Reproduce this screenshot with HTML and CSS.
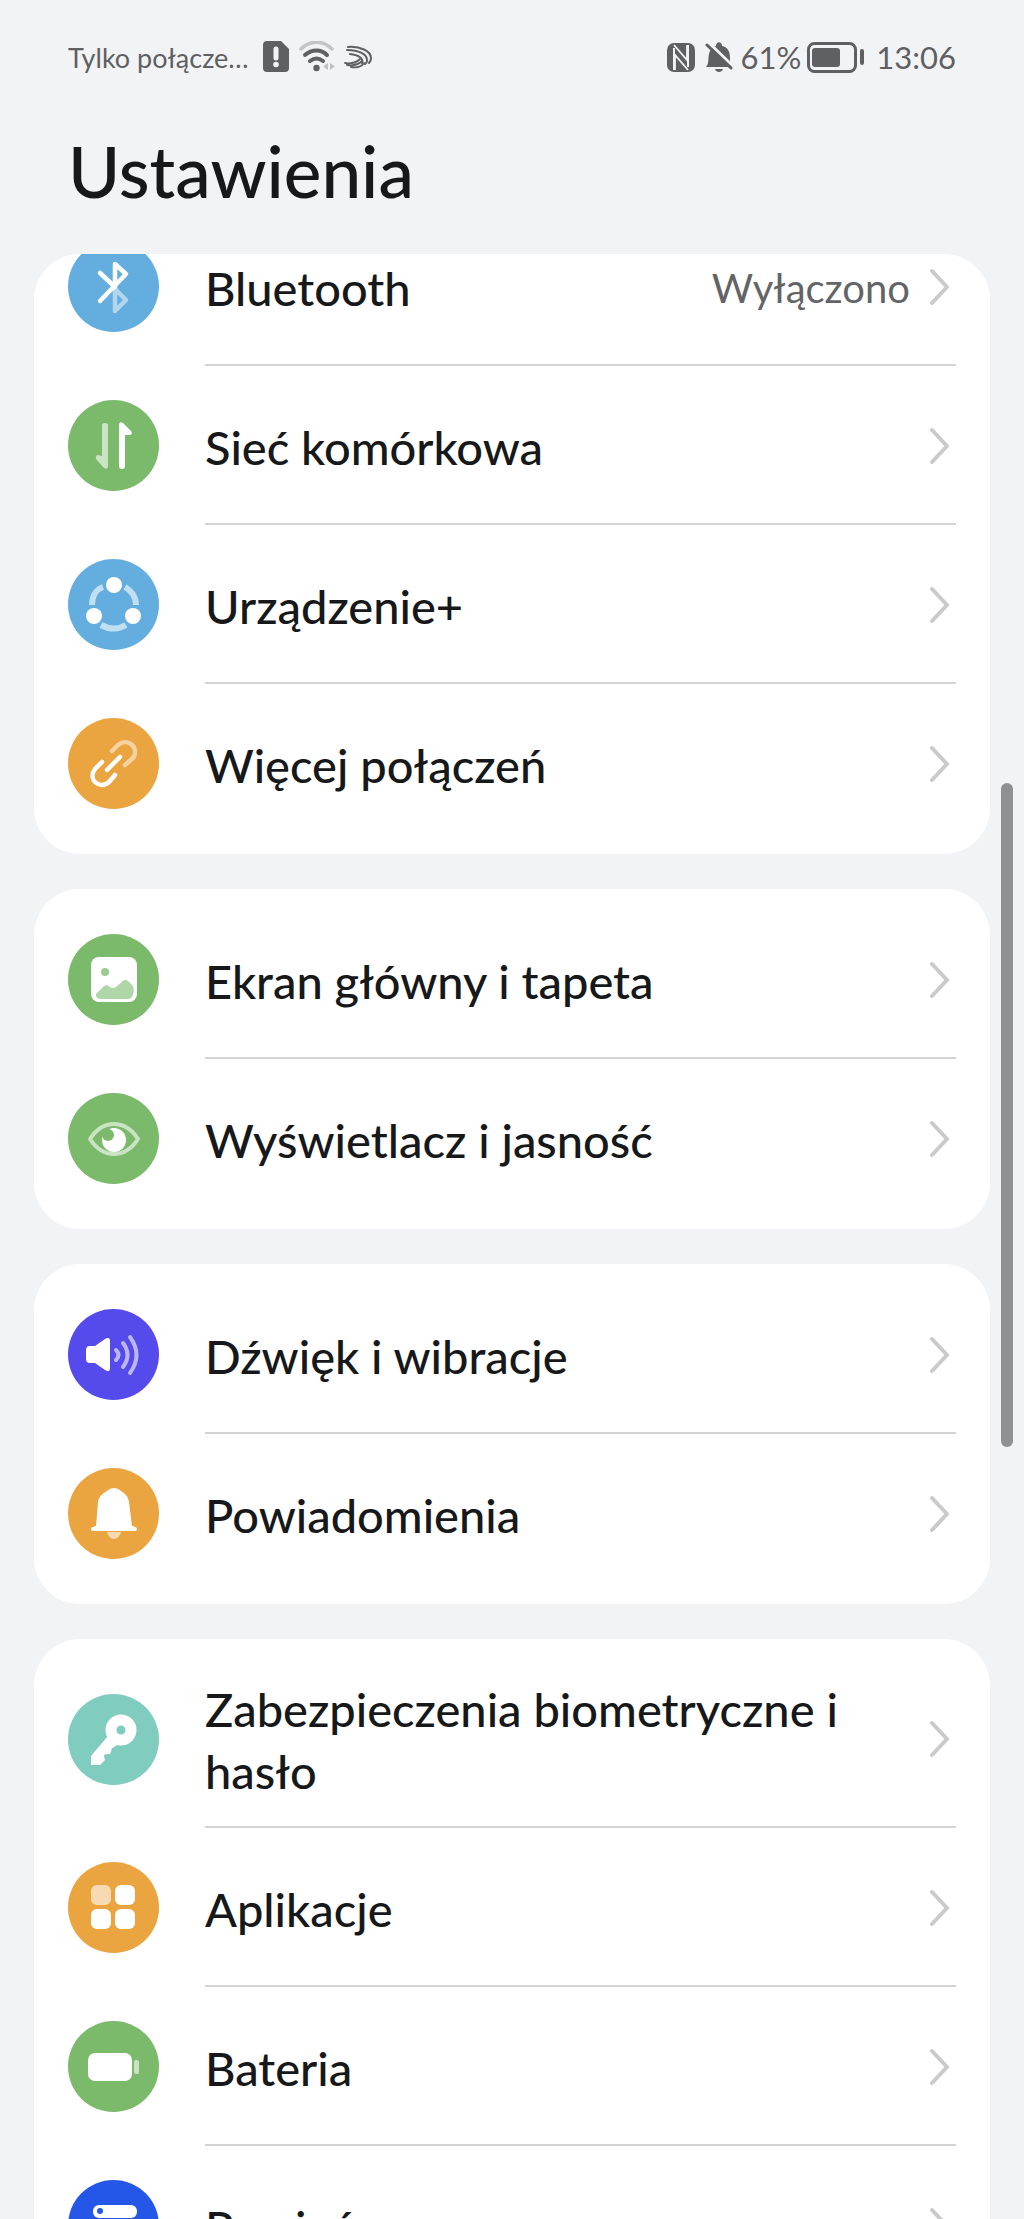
FILE: index.html
```html
<!DOCTYPE html>
<html lang="pl">
<head>
  <meta charset="UTF-8" />
  <meta name="viewport" content="width=device-width, initial-scale=1.0" />
  <title>Ustawienia</title>
  <link rel="stylesheet" href="styles.css">
</head>
<body>
  <header class="status-bar">
    <div class="status-side">
      <span class="carrier">Tylko połącze…</span>
      <svg class="status-icon" width="26" height="32" viewBox="0 0 26 32">
        <path d="M4 0h14l8 8v19a4 4 0 0 1-4 4H4a4 4 0 0 1-4-4V4a4 4 0 0 1 4-4z" fill="#5f6062"/>
        <path d="M13 8v9" stroke="#f1f3f5" stroke-width="5" stroke-linecap="round"/>
        <circle cx="13" cy="23.5" r="2.8" fill="#f1f3f5"/>
      </svg>
      <svg class="status-icon wifi" width="37" height="32" viewBox="0 0 37 32" fill="none" stroke-linecap="round">
        <path d="M2 8C11-1 24-1 33 8" stroke="#c4c5c7" stroke-width="3.5"/>
        <path d="M6 14C13 8 22 8 28 14M11 20C15 17 20 17 24 20" stroke="#5f6062" stroke-width="4"/>
        <circle cx="17.5" cy="27" r="3.2" fill="#5f6062"/>
        <path d="M29 22v7l-5-3.500zM31 22v7l5-3.500z" fill="#bfc0c2"/>
      </svg>
      <svg class="status-icon" width="28" height="24" viewBox="0 0 28 24" fill="none" stroke="#5f6062" stroke-linecap="round">
        <path d="M4 2C16 1 27 6 27 13q0 3-2 5" stroke-width="2"/>
        <path d="M3 5C14 5 24 9 23 16q0 2-2 3" stroke-width="2"/>
        <path d="M6 9C14 10 20 13 18 18" stroke-width="2"/>
        <path d="M1 18C8 19 13 17 16 14M3 20C10 21 15 19 18 16M7 22C13 23 18 21 20 18" stroke-width="1.8"/>
      </svg>
    </div>
    <div class="status-side">
      <svg class="status-icon" width="28" height="29" viewBox="0 0 28 29">
        <rect width="28" height="29" rx="7" fill="#5f6062"/>
        <path d="M7 5v22M21 2v22" stroke="#f1f3f5" stroke-width="2"/>
        <path d="M7 2l13 15V2M21 27L8 12v15" fill="none" stroke="#f1f3f5" stroke-width="1.8"/>
      </svg>
      <svg class="status-icon bell" width="28" height="30" viewBox="0 0 28 30">
        <path d="M1 25c3-3 2-8 3-13 1-4 3-7 7-8 0-5 6-5 6 0 6 1 8 6 8 12 0 5 0 6 3 9z" fill="#5f6062"/>
        <path d="M10 27h8c-1 4-7 4-8 0z" fill="#5f6062"/>
        <path d="M3 0l26 25" stroke="#f1f3f5" stroke-width="3"/>
        <path d="M2 3l24 23" stroke="#5f6062" stroke-width="3" stroke-linecap="round"/>
      </svg>
      <span class="battery-level">61%</span>
      <svg class="status-icon" width="57" height="31" viewBox="0 0 57 31">
        <rect x="1.5" y="1.5" width="47" height="28" rx="6" fill="none" stroke="#5f6062" stroke-width="3"/>
        <rect x="5" y="6" width="28" height="19" rx="3" fill="#5f6062"/>
        <rect x="53" y="7" width="4" height="16" rx="2" fill="#5f6062"/>
      </svg>
      <time class="clock">13:06</time>
    </div>
  </header>

  <h1 class="page-title">Ustawienia</h1>

  <main class="settings">
    <nav class="card card-scrolled">
      <a class="row" href="#">
        <svg class="icon blue" viewBox="0 0 91 91" fill="none" stroke="#fff" stroke-width="4.500" stroke-linecap="round" stroke-linejoin="round">
          <path d="M47 45v25l11-11-10-10" opacity=".5"/>
          <path d="M32 32l15 14V23l11 10L32 60"/>
        </svg>
        <span class="label">Bluetooth</span>
        <span class="value">Wyłączono</span>
        <svg class="chevron" viewBox="0 0 20 38"><path d="M2 3l15 16L2 35"/></svg>
      </a>
      <a class="row" href="#">
        <svg class="icon green" viewBox="0 0 91 91" fill="#fff">
          <path d="M34 25q0-2 3-2t3 2v41q0 4-4 2l-8-9q-1-4 2-4l4 1z" opacity=".6"/>
          <path d="M51 66q0 3 3 3t3-3V35l5 0q3-1 1-4l-8-8q-4-2-4 2z"/>
        </svg>
        <span class="label">Sieć komórkowa</span>
        <svg class="chevron" viewBox="0 0 20 38"><path d="M2 3l15 16L2 35"/></svg>
      </a>
      <a class="row" href="#">
        <svg class="icon blue" viewBox="0 0 91 91" fill="#fff">
          <path d="M24 46C24 36 29 30 35 28M57 28C64 32 68 38 68 46M33 66Q46 73 58 66" fill="none" stroke="#fff" stroke-width="6" opacity=".6"/>
          <circle cx="46" cy="26" r="8"/>
          <circle cx="26" cy="57" r="8"/>
          <circle cx="65" cy="57" r="8"/>
        </svg>
        <span class="label">Urządzenie+</span>
        <svg class="chevron" viewBox="0 0 20 38"><path d="M2 3l15 16L2 35"/></svg>
      </a>
      <a class="row" href="#">
        <svg class="icon orange" viewBox="0 0 91 91" fill="none" stroke="#fff" stroke-width="4.500" stroke-linecap="round" stroke-linejoin="round">
          <path d="M44 33l6-6c10-8 22 3 15 13l-8 7" opacity=".5"/>
          <path d="M34 44l-7 7c-8 11 5 21 14 13l6-7M39 52l13-13"/>
        </svg>
        <span class="label">Więcej połączeń</span>
        <svg class="chevron" viewBox="0 0 20 38"><path d="M2 3l15 16L2 35"/></svg>
      </a>
    </nav>

    <nav class="card">
      <a class="row" href="#">
        <svg class="icon green" viewBox="0 0 91 91" fill="#fff">
          <rect x="23" y="23" width="46" height="45" rx="8"/>
          <circle cx="37" cy="38" r="4" fill="#7aba6a" opacity=".75"/>
          <path d="M28 60l8-8q3-2 6 1 3 2 6 0l8-7q2-1 4 1l4 4q3 3 1 10-1 4-6 4H33q-4 0-5-3z" fill="#7aba6a" opacity=".6"/>
        </svg>
        <span class="label">Ekran główny i tapeta</span>
        <svg class="chevron" viewBox="0 0 20 38"><path d="M2 3l15 16L2 35"/></svg>
      </a>
      <a class="row" href="#">
        <svg class="icon green" viewBox="0 0 91 91">
          <path d="M22 46C35 26 57 26 70 46 57 66 35 66 22 46z" fill="none" stroke="#fff" stroke-width="4" stroke-linejoin="round" opacity=".6"/>
          <circle cx="46" cy="47" r="12" fill="#fff"/>
          <circle cx="40" cy="42" r="6" fill="#7aba6a"/>
        </svg>
        <span class="label">Wyświetlacz i jasność</span>
        <svg class="chevron" viewBox="0 0 20 38"><path d="M2 3l15 16L2 35"/></svg>
      </a>
    </nav>

    <nav class="card">
      <a class="row" href="#">
        <svg class="icon violet" viewBox="0 0 91 91">
          <path d="M18 41q0-4 4-4h5l10-7q5-3 5 2v27q0 5-5 2l-10-7h-5q-4 0-4-4z" fill="#fff"/>
          <path d="M48 41q5 5 0 10M55 34q9 12 0 24M62 28q13 18 0 36" fill="none" stroke="#fff" stroke-width="4" stroke-linecap="round" opacity=".6"/>
        </svg>
        <span class="label">Dźwięk i wibracje</span>
        <svg class="chevron" viewBox="0 0 20 38"><path d="M2 3l15 16L2 35"/></svg>
      </a>
      <a class="row" href="#">
        <svg class="icon orange" viewBox="0 0 91 91" fill="#fff">
          <path d="M39 64h14q-2 7-7 7t-7-7z" opacity=".6"/>
          <path d="M25 63q-2 0-2-2t5-3l2-24q1-7 9-11 3-3 7-3t7 3q7 4 8 11l3 24q5 1 5 3t-2 2z"/>
        </svg>
        <span class="label">Powiadomienia</span>
        <svg class="chevron" viewBox="0 0 20 38"><path d="M2 3l15 16L2 35"/></svg>
      </a>
    </nav>

    <nav class="card">
      <a class="row" href="#">
        <svg class="icon teal" viewBox="0 0 91 91">
          <path d="M40 42l9 9-3 2q-3 1-3 5-1 3-4 2-3 0-3 2l1 4-5 5h-9v-9z" fill="#fff"/>
          <circle cx="53" cy="36" r="10" fill="none" stroke="#fff" stroke-width="11"/>
        </svg>
        <span class="label">Zabezpieczenia biometryczne i hasło</span>
        <svg class="chevron" viewBox="0 0 20 38"><path d="M2 3l15 16L2 35"/></svg>
      </a>
      <a class="row" href="#">
        <svg class="icon orange" viewBox="0 0 91 91" fill="#fff">
          <rect x="23" y="23" width="20" height="20" rx="6" opacity=".6"/>
          <rect x="47" y="23" width="20" height="20" rx="6"/>
          <rect x="23" y="47" width="20" height="20" rx="6"/>
          <rect x="47" y="47" width="20" height="20" rx="6"/>
        </svg>
        <span class="label">Aplikacje</span>
        <svg class="chevron" viewBox="0 0 20 38"><path d="M2 3l15 16L2 35"/></svg>
      </a>
      <a class="row" href="#">
        <svg class="icon green" viewBox="0 0 91 91" fill="#fff">
          <rect x="20" y="32" width="44" height="28" rx="7"/>
          <rect x="66" y="39" width="5" height="14" rx="2" opacity=".6"/>
        </svg>
        <span class="label">Bateria</span>
        <svg class="chevron" viewBox="0 0 20 38"><path d="M2 3l15 16L2 35"/></svg>
      </a>
      <a class="row" href="#">
        <svg class="icon navy" viewBox="0 0 91 91" fill="#fff">
          <rect x="25" y="25" width="44" height="13" rx="6"/>
          <circle cx="32" cy="31" r="3" fill="#2457e8"/>
          <rect x="25" y="41" width="44" height="13" rx="6" opacity=".6"/>
          <rect x="25" y="57" width="44" height="13" rx="6"/>
        </svg>
        <span class="label">Pamięć</span>
        <svg class="chevron" viewBox="0 0 20 38"><path d="M2 3l15 16L2 35"/></svg>
      </a>
    </nav>
  </main>

  <div class="scroll-thumb"></div>
</body>
</html>
```
FILE: styles.css
```css
* {
  box-sizing: border-box;
}
body {
  position: relative;
  height: 100vh;
  margin: 0;
  overflow: hidden;
  background-color: #f1f3f5;
  color: #17181a;
  font-family: Lato, "Noto Sans", sans-serif;
}
.status-bar {
  display: flex;
  justify-content: space-between;
  align-items: center;
  height: 114px;
  padding: 0 68px;
  color: #5f6062;
}
.status-side {
  display: flex;
  align-items: center;
}
.status-icon {
  display: block;
  flex: none;
}
.carrier {
  margin-right: 14px;
  font-size: 27px;
}
.wifi {
  margin: 0 8px 0 10px;
}
.bell {
  margin: 0 8px 0 10px;
}
.battery-level,
.clock {
  font-size: 31px;
}
.battery-level {
  margin-right: 6px;
}
.clock {
  margin-left: 12px;
}
.page-title {
  margin: 0;
  padding: 0 68px;
  height: 140px;
  font-size: 71px;
  font-weight: 500;
  line-height: 114px;
}
.settings {
  display: flex;
  flex-direction: column;
  gap: 35px;
  padding: 0 34px;
}
.card {
  flex: none;
  padding: 11px 34px;
  border-radius: 46px;
  background-color: #fff;
  overflow: hidden;
}
.card-scrolled {
  padding-top: 0;
}
/* first row is partly scrolled under the header */
.card-scrolled .row:first-child {
  margin-top: -47px;
}
.row {
  display: flex;
  align-items: center;
  min-height: 159px;
  padding: 26px 0;
  color: inherit;
  text-decoration: none;
  background: linear-gradient(#d4d4d4, #d4d4d4) no-repeat 137px 100%;
  background-size: 100% 2px;
}
.row:last-child {
  background: none;
}
.icon {
  flex: none;
  width: 91px;
  height: 91px;
  margin-right: 46px;
  border-radius: 50%;
}
.blue {
  background-color: #63aede;
}
.green {
  background-color: #7aba6a;
}
.orange {
  background-color: #eaa440;
}
.violet {
  background-color: #554bec;
}
.teal {
  background-color: #80ccbe;
}
.navy {
  background-color: #2457e8;
}
.label {
  flex: 1;
  padding: 2px 60px 0 0;
  font-size: 47px;
  font-weight: 500;
  line-height: 62px;
}
.value {
  margin-right: 20px;
  padding-top: 2px;
  color: #636466;
  font-size: 40px;
}
.chevron {
  flex: none;
  width: 20px;
  height: 38px;
  margin-right: 6px;
  fill: none;
  stroke: #cacaca;
  stroke-width: 4;
  stroke-linecap: round;
  stroke-linejoin: round;
}
.scroll-thumb {
  position: absolute;
  top: 783px;
  right: 11px;
  width: 12px;
  height: 664px;
  border-radius: 6px;
  background-color: #8f9092;
}
```
